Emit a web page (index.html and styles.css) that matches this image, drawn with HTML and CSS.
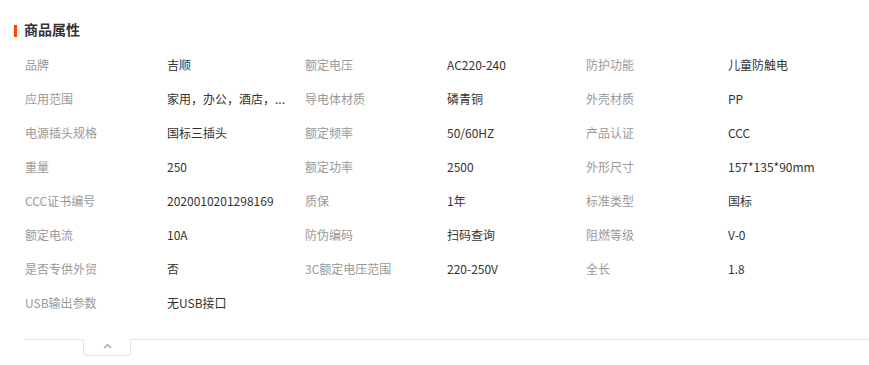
FILE: index.html
```html
<!DOCTYPE html>
<html lang="zh">
<head>
<meta charset="utf-8">
<link rel="stylesheet" href="styles.css">
</head>
<body>
<div class="attrs">
  <h3 class="title">商品属性</h3>
  <div class="grid">
    <span class="k">品牌</span><span class="v">吉顺</span>
    <span class="k">额定电压</span><span class="v">AC220-240</span>
    <span class="k">防护功能</span><span class="v">儿童防触电</span>

    <span class="k">应用范围</span><span class="v">家用，办公，酒店，...</span>
    <span class="k">导电体材质</span><span class="v">磷青铜</span>
    <span class="k">外壳材质</span><span class="v">PP</span>

    <span class="k">电源插头规格</span><span class="v">国标三插头</span>
    <span class="k">额定频率</span><span class="v">50/60HZ</span>
    <span class="k">产品认证</span><span class="v">CCC</span>

    <span class="k">重量</span><span class="v">250</span>
    <span class="k">额定功率</span><span class="v">2500</span>
    <span class="k">外形尺寸</span><span class="v">157*135*90mm</span>

    <span class="k">CCC证书编号</span><span class="v">2020010201298169</span>
    <span class="k">质保</span><span class="v">1年</span>
    <span class="k">标准类型</span><span class="v">国标</span>

    <span class="k">额定电流</span><span class="v">10A</span>
    <span class="k">防伪编码</span><span class="v">扫码查询</span>
    <span class="k">阻燃等级</span><span class="v">V-0</span>

    <span class="k">是否专供外贸</span><span class="v">否</span>
    <span class="k">3C额定电压范围</span><span class="v">220-250V</span>
    <span class="k">全长</span><span class="v">1.8</span>

    <span class="k">USB输出参数</span><span class="v">无USB接口</span>
  </div>
  <div class="fold">
    <button class="fold-tab" type="button" aria-label="收起">
      <svg width="9" height="6" viewBox="0 0 9 6"><path d="M1 5 L4.5 1.5 L8 5" fill="none" stroke="#999" stroke-width="1.2"/></svg>
    </button>
  </div>
</div>
</body>
</html>
```
FILE: styles.css
```css
html, body {
  margin: 0;
  padding: 0;
  background: #fff;
}
body {
  font-family: "Noto Sans CJK SC", "Noto Sans", sans-serif;
  font-size: 12px;
  color: #333;
}
.attrs {
  padding: 19px 0 0 24px;
}
.title {
  margin: 0;
  height: 20px;
  line-height: 20px;
  font-size: 14px;
  font-weight: 700;
  color: #333;
  position: relative;
}
.title::before {
  content: "";
  position: absolute;
  left: -10px;
  top: 6px;
  width: 3px;
  height: 12px;
  background: #ff4400;
}
.grid {
  margin-top: 8px;
  display: grid;
  grid-template-columns: 142px 138px 142px 139px 142px 1fr;
  grid-auto-rows: 34px;
  align-items: center;
  padding-left: 1px;
}
.k {
  color: #999;
  white-space: nowrap;
}
.v {
  color: #333;
  white-space: nowrap;
}
.fold {
  margin-top: 20px;
  border-top: 1px solid #e5e5e5;
  padding-left: 59px;
  height: 20px;
}
.fold-tab {
  display: flex;
  align-items: flex-start;
  justify-content: center;
  box-sizing: border-box;
  width: 48px;
  height: 17px;
  margin-top: -1px;
  padding: 3px 0 0 0;
  background: #fff;
  border: 1px solid #e3e3e3;
  border-top: 1px solid #fff;
  border-radius: 0 0 4px 4px;
}
```
